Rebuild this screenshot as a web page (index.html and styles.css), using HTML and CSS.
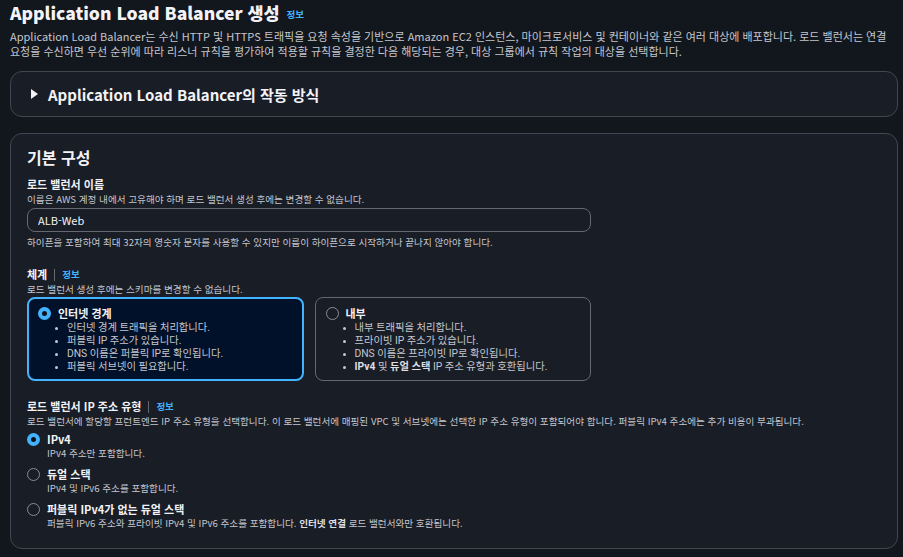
FILE: index.html
```html
<!DOCTYPE html>
<html lang="ko">
<head>
  <meta charset="UTF-8">
  <title>Application Load Balancer 생성</title>
  <link rel="stylesheet" href="styles.css">
</head>
<body>
  <div class="page">
    <!-- Page header -->
    <header class="page-header">
      <h1>Application Load Balancer 생성 <a class="info" href="#">정보</a></h1>
      <p class="lead">Application Load Balancer는 수신 HTTP 및 HTTPS 트래픽을 요청 속성을 기반으로 Amazon EC2 인스턴스, 마이크로서비스 및 컨테이너와 같은 여러 대상에 배포합니다. 로드 밸런서는 연결 요청을 수신하면 우선 순위에 따라 리스너 규칙을 평가하여 적용할 규칙을 결정한 다음 해당되는 경우, 대상 그룹에서 규칙 작업의 대상을 선택합니다.</p>
    </header>

    <!-- How it works expander -->
    <div class="panel expander">
      <span class="caret"></span>
      <h2>Application Load Balancer의 작동 방식</h2>
    </div>

    <!-- Basic configuration -->
    <section class="panel config">
      <h2 class="config-title">기본 구성</h2>

      <div class="field">
        <div class="field-label">로드 밸런서 이름</div>
        <div class="field-desc">이름은 AWS 계정 내에서 고유해야 하며 로드 밸런서 생성 후에는 변경할 수 없습니다.</div>
        <input class="text-input" type="text" value="ALB-Web">
        <div class="field-hint">하이픈을 포함하여 최대 32자의 영숫자 문자를 사용할 수 있지만 이름이 하이픈으로 시작하거나 끝나지 않아야 합니다.</div>
      </div>

      <div class="field">
        <div class="field-label">체계 <span class="sep"></span><a class="info" href="#">정보</a></div>
        <div class="field-desc">로드 밸런서 생성 후에는 스키마를 변경할 수 없습니다.</div>
        <div class="tiles">
          <div class="tile selected">
            <div class="tile-head"><span class="radio checked"></span>인터넷 경계</div>
            <ul>
              <li>인터넷 경계 트래픽을 처리합니다.</li>
              <li>퍼블릭 IP 주소가 있습니다.</li>
              <li>DNS 이름은 퍼블릭 IP로 확인됩니다.</li>
              <li>퍼블릭 서브넷이 필요합니다.</li>
            </ul>
          </div>
          <div class="tile">
            <div class="tile-head"><span class="radio"></span>내부</div>
            <ul>
              <li>내부 트래픽을 처리합니다.</li>
              <li>프라이빗 IP 주소가 있습니다.</li>
              <li>DNS 이름은 프라이빗 IP로 확인됩니다.</li>
              <li><b>IPv4</b> 및 <b>듀얼 스택</b> IP 주소 유형과 호환됩니다.</li>
            </ul>
          </div>
        </div>
      </div>

      <div class="field">
        <div class="field-label">로드 밸런서 IP 주소 유형 <span class="sep"></span><a class="info" href="#">정보</a></div>
        <div class="field-desc">로드 밸런서에 할당할 프런트엔드 IP 주소 유형을 선택합니다. 이 로드 밸런서에 매핑된 VPC 및 서브넷에는 선택한 IP 주소 유형이 포함되어야 합니다. 퍼블릭 IPv4 주소에는 추가 비용이 부과됩니다.</div>
        <div class="options">
          <div class="option">
            <span class="radio checked"></span>
            <div>
              <div class="option-title">IPv4</div>
              <div class="option-desc">IPv4 주소만 포함합니다.</div>
            </div>
          </div>
          <div class="option">
            <span class="radio"></span>
            <div>
              <div class="option-title">듀얼 스택</div>
              <div class="option-desc">IPv4 및 IPv6 주소를 포함합니다.</div>
            </div>
          </div>
          <div class="option">
            <span class="radio"></span>
            <div>
              <div class="option-title">퍼블릭 IPv4가 없는 듀얼 스택</div>
              <div class="option-desc">퍼블릭 IPv6 주소와 프라이빗 IPv4 및 IPv6 주소를 포함합니다. <b>인터넷 연결</b> 로드 밸런서와만 호환됩니다.</div>
            </div>
          </div>
        </div>
      </div>
    </section>
  </div>
</body>
</html>
```

FILE: styles.css
```css
/* General */
body {
  background-color: #12161d;
  color: #c6c6cd;
  font-family: "Noto Sans CJK KR", sans-serif;
  margin: 0;
  padding: 0;
}

.page {
  padding: 0 5px 10px 10px;
}

a.info {
  color: #42b4ff;
  font-weight: bold;
  font-size: 9.5px;
  line-height: 1;
  text-decoration: none;
}

/* Header */
.page-header h1 {
  margin: 0 0 5px;
  padding-top: 2px;
  font-size: 17.5px;
  line-height: 22px;
  color: #f3f3f7;
  font-weight: 900;
}

.page-header h1 .info {
  margin-left: 2px;
  vertical-align: 2px;
}

.lead {
  margin: 0;
  font-size: 11px;
  line-height: 15px;
}

/* Panels */
.panel {
  background-color: #181d26;
  border: 1px solid #424650;
  border-radius: 12px;
}

.expander {
  margin-top: 12px;
  height: 44px;
  display: flex;
  align-items: center;
  padding-left: 20px;
}

.expander h2 {
  margin: 0;
  font-size: 15px;
  color: #f3f3f7;
}

.caret {
  width: 0;
  height: 0;
  border-top: 5px solid transparent;
  border-bottom: 5px solid transparent;
  border-left: 7px solid #f3f3f7;
  margin-right: 10px;
}

.config {
  margin-top: 16px;
  padding: 11px 16px 18px;
}

.config-title {
  margin: 0 0 8px;
  font-size: 16px;
  line-height: 24px;
  color: #f3f3f7;
}

/* Form fields */
.field {
  max-width: 564px;
  margin-bottom: 18px;
}

.field:last-child {
  margin-bottom: 0;
  max-width: none;
}

.field-label {
  font-size: 11px;
  font-weight: bold;
  line-height: 15px;
  color: #f3f3f7;
  display: flex;
  align-items: center;
}

.sep {
  display: inline-block;
  width: 1px;
  height: 12px;
  background-color: #656871;
  margin: 0 7px;
}

.field-desc,
.field-hint {
  font-size: 9.6px;
  line-height: 14px;
}

.text-input {
  display: block;
  box-sizing: border-box;
  width: 100%;
  height: 24px;
  margin: 2px 0 3px;
  padding: 0 10px;
  background-color: #181d26;
  border: 1px solid #656871;
  border-radius: 8px;
  color: #f3f3f7;
  font-family: inherit;
  font-size: 11px;
}

/* Scheme tiles */
.tiles {
  display: grid;
  grid-template-columns: 1fr 1fr;
  gap: 11px;
  margin-top: 1px;
}

.tile {
  height: 84px;
  box-sizing: border-box;
  border: 1px solid #656871;
  border-radius: 8px;
  padding: 8px 10px;
}

.tile.selected {
  background-color: #001129;
  border: 2px solid #42b4ff;
  padding: 7px 9px;
}

.tile-head {
  display: flex;
  align-items: center;
  font-size: 11px;
  font-weight: bold;
  line-height: 15px;
  color: #f3f3f7;
}

.tile ul {
  margin: 0;
  padding-left: 29px;
  font-family: Roboto, "Noto Sans CJK KR", sans-serif;
  font-size: 10.3px;
  line-height: 13px;
}

.tile li::marker {
  font-size: 9px;
}

/* Radios */
.radio {
  flex: none;
  box-sizing: border-box;
  width: 13px;
  height: 13px;
  border: 1.5px solid #8c8c94;
  border-radius: 50%;
  margin-right: 7px;
}

.radio.checked {
  border: 4px solid #42b4ff;
  background-color: #0f141a;
}

/* IP address type options */
.options {
  margin-top: 4px;
}

.option {
  display: flex;
  align-items: flex-start;
  margin-bottom: 7px;
}

.option:last-child {
  margin-bottom: 0;
}

.option .radio {
  margin: 1px 7px 0 0;
}

.option-title {
  font-size: 11px;
  font-weight: bold;
  line-height: 15px;
  color: #f3f3f7;
}

.option-desc {
  font-size: 9.6px;
  line-height: 13px;
}

b {
  color: #dedee3;
}
```
